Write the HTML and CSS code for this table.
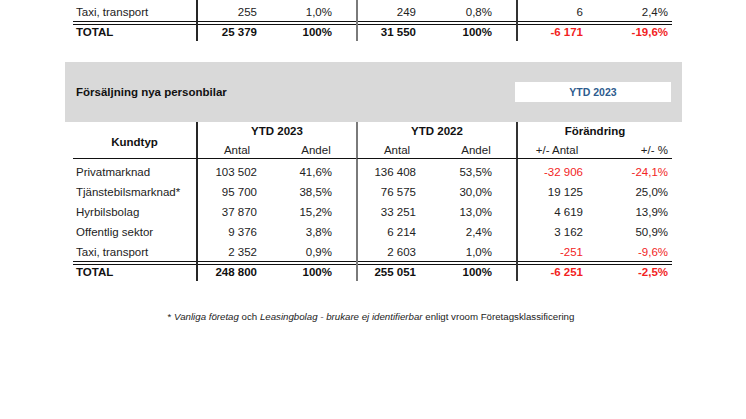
FILE: index.html
```html
<!DOCTYPE html>
<html lang="sv">
<head>
<meta charset="utf-8">
<title>Försäljning nya personbilar</title>
<link rel="stylesheet" href="styles.css">
</head>
<body>
<div class="page">
  <table class="tbl top">
    <colgroup><col class="cl"><col class="cn"><col class="cn"><col class="cn"><col class="cn"><col class="cn"><col class="cl6"></colgroup>
    <tbody>
      <tr class="data lead">
        <td class="lbl">Taxi, transport</td><td class="c1 b1">255</td><td class="c2">1,0%</td><td class="c3 b2">249</td><td class="c4">0,8%</td><td class="c5 b3">6</td><td class="c6">2,4%</td>
      </tr>
      <tr class="total">
        <td class="lbl">TOTAL</td><td class="c1 b1">25 379</td><td class="c2">100%</td><td class="c3 b2">31 550</td><td class="c4">100%</td><td class="c5 b3 neg">-6 171</td><td class="c6 neg">-19,6%</td>
      </tr>
    </tbody>
  </table>

  <section class="block">
    <div class="band">
      <h2 class="title">Försäljning nya personbilar</h2>
      <div class="period">YTD 2023</div>
    </div>
    <table class="tbl">
      <colgroup><col class="cl"><col class="cn"><col class="cn"><col class="cn"><col class="cn"><col class="cn"><col class="cl6"></colgroup>
      <thead>
        <tr class="grp">
          <th rowspan="2" class="kund">Kundtyp</th>
          <th colspan="2" class="b1">YTD 2023</th>
          <th colspan="2" class="b2">YTD 2022</th>
          <th colspan="2" class="b3">Förändring</th>
        </tr>
        <tr class="sub">
          <th class="b1">Antal</th><th>Andel</th><th class="b2">Antal</th><th>Andel</th><th class="b3">+/- Antal</th><th class="c6">+/- %</th>
        </tr>
      </thead>
      <tbody>
        <tr class="data first">
          <td class="lbl">Privatmarknad</td><td class="c1 b1">103 502</td><td class="c2">41,6%</td><td class="c3 b2">136 408</td><td class="c4">53,5%</td><td class="c5 b3 neg">-32 906</td><td class="c6 neg">-24,1%</td>
        </tr>
        <tr class="data">
          <td class="lbl">Tjänstebilsmarknad*</td><td class="c1 b1">95 700</td><td class="c2">38,5%</td><td class="c3 b2">76 575</td><td class="c4">30,0%</td><td class="c5 b3">19 125</td><td class="c6">25,0%</td>
        </tr>
        <tr class="data">
          <td class="lbl">Hyrbilsbolag</td><td class="c1 b1">37 870</td><td class="c2">15,2%</td><td class="c3 b2">33 251</td><td class="c4">13,0%</td><td class="c5 b3">4 619</td><td class="c6">13,9%</td>
        </tr>
        <tr class="data">
          <td class="lbl">Offentlig sektor</td><td class="c1 b1">9 376</td><td class="c2">3,8%</td><td class="c3 b2">6 214</td><td class="c4">2,4%</td><td class="c5 b3">3 162</td><td class="c6">50,9%</td>
        </tr>
        <tr class="data">
          <td class="lbl">Taxi, transport</td><td class="c1 b1">2 352</td><td class="c2">0,9%</td><td class="c3 b2">2 603</td><td class="c4">1,0%</td><td class="c5 b3 neg">-251</td><td class="c6 neg">-9,6%</td>
        </tr>
        <tr class="total">
          <td class="lbl">TOTAL</td><td class="c1 b1">248 800</td><td class="c2">100%</td><td class="c3 b2">255 051</td><td class="c4">100%</td><td class="c5 b3 neg">-6 251</td><td class="c6 neg">-2,5%</td>
        </tr>
      </tbody>
    </table>
  </section>

  <p class="note">* <em>Vanliga företag</em> och <em>Leasingbolag - brukare ej identifierbar</em> enligt vroom Företagsklassificering</p>
</div>
</body>
</html>
```
FILE: styles.css
```css
* { box-sizing: border-box; }

body {
  margin: 0;
  background: #fff;
  font-family: "Liberation Sans", Arial, sans-serif;
  font-size: 11.5px;
  color: #222;
}

.page { width: 746px; }

.tbl {
  margin-left: 73px;
  width: 599px;
  border-collapse: separate;
  border-spacing: 0;
  table-layout: fixed;
}

col.cl { width: 123px; }
col.cn { width: 80px; }
col.cl6 { width: 76px; }

td, th { padding: 0; white-space: nowrap; }

.lbl { text-align: left; padding-left: 3px; }
.c1 { text-align: right; padding-right: 19px; }
.c2 { text-align: right; padding-right: 24px; }
.c3 { text-align: right; padding-right: 20px; }
.c4 { text-align: right; padding-right: 24px; }
.c5 { text-align: right; padding-right: 13px; }
.c6 { text-align: right; padding-right: 4px; }

.b1 { border-left: 2px solid #262626; }
.b2 { border-left: 2px solid #7a7a7a; }
.b3 { border-left: 2px solid #333; }

.neg { color: #f22525; }

.data td { padding-top: 2px; line-height: 18px; }
.data.first td { padding-top: 4px; }
.data.lead td { padding-top: 3px; }

.total td {
  padding-top: 4px;
  padding-bottom: 1px;
  line-height: 15px;
  font-weight: bold;
  color: #111;
  background-image: linear-gradient(to bottom, #111 0, #111 1px, transparent 1px, transparent 3px, #111 3px, #111 4px, transparent 4px);
}
.total td.neg { color: #f21f1f; }

.block { margin-top: 21px; }

.band {
  margin-left: 65px;
  width: 617px;
  height: 60px;
  background: #d9d9d9;
  display: flex;
  align-items: center;
  padding-left: 11px;
}

.title {
  margin: 0;
  font-size: 11.5px;
  font-weight: bold;
  color: #111;
}

.period {
  margin-left: auto;
  margin-right: 11px;
  width: 156px;
  height: 20px;
  line-height: 20px;
  background: #fff;
  text-align: center;
  font-size: 10.5px;
  font-weight: bold;
  color: #2e5c8e;
}

thead th { font-weight: normal; color: #222; }

.grp th {
  line-height: 19px;
  font-weight: bold;
  color: #111;
  text-align: center;
}

.grp th.kund {
  vertical-align: middle;
  padding-top: 5px;
  border-bottom: 1px solid #111;
}

.sub th {
  padding-top: 2px;
  line-height: 15px;
  text-align: center;
  border-bottom: 1px solid #111;
}
.sub th.c6 { text-align: right; padding-right: 4px; }

.note {
  margin: 30px 0 0;
  padding-right: 4px;
  font-size: 9.7px;
  line-height: 12px;
  text-align: center;
  color: #222;
}
```
